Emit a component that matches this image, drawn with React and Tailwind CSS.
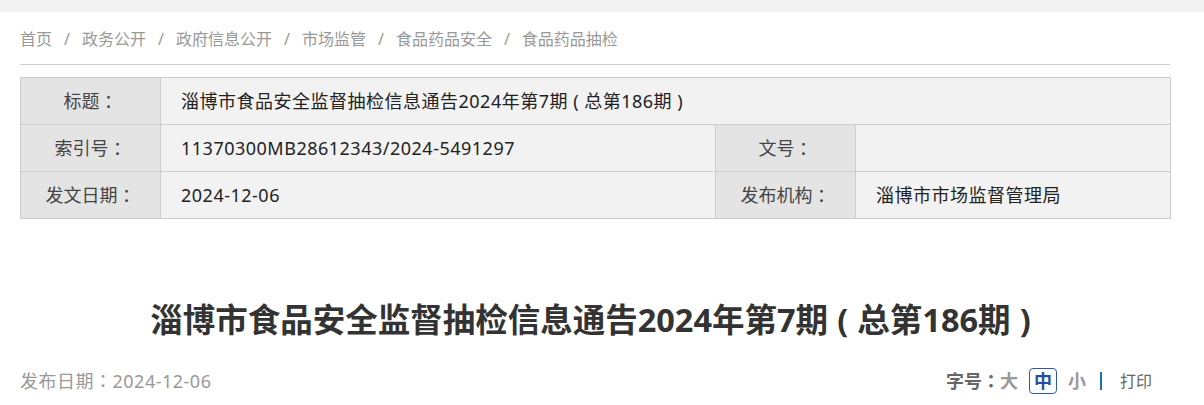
import React from 'react';

const crumbs = ['首页', '政务公开', '政府信息公开', '市场监管', '食品药品安全', '食品药品抽检'];

const font = { fontFamily: '"Noto Sans", "Noto Sans CJK SC", sans-serif' };

// centred full-width colon, as in the original page
function P({ children }) {
  return <span className="font-['Noto_Sans_CJK_TC',sans-serif]">{children}</span>;
}

// bracket centred in a full-width box
function B({ children }) {
  return <span className="inline-block w-[0.9em] text-center">{children}</span>;
}

function Label({ children, className = '' }) {
  return (
    <div className={`h-[47px] flex items-center justify-center bg-[#e4e4e4] border-r border-b border-[#cdcdcd] text-[18px] text-[#444] ${className}`}>
      {children}
    </div>
  );
}

function Value({ children, className = '' }) {
  return (
    <div className={`h-[47px] flex items-center pl-[20px] bg-[#f2f2f2] border-r border-b border-[#cdcdcd] text-[18px] tracking-[0.5px] text-[#222] ${className}`}>
      {children}
    </div>
  );
}

export default function App() {
  return (
    <div className="w-[1204px] h-[405px] bg-white overflow-hidden" style={font}>
      {/* top strip */}
      <div className="h-[12px] bg-[#f2f2f2]" />

      <div className="w-[1150px] ml-[20px]">
        {/* Breadcrumb */}
        <div className="pt-[15px] pb-[13px] border-b border-[#cccccc] flex items-center text-[16px] leading-[24px] text-[#999]">
          {crumbs.map((c, i) => (
            <React.Fragment key={c}>
              {i > 0 && <span className="px-[12px]">/</span>}
              <span>{c}</span>
            </React.Fragment>
          ))}
        </div>

        {/* Info table */}
        <div className="mt-[12px] grid grid-cols-[140px_555px_140px_315px] border-l border-t border-[#cdcdcd]">
          <Label>标题<P>：</P></Label>
          <Value className="col-span-3 tracking-[0.2px]">
            <span>淄博市食品安全监督抽检信息通告2024年第7期<B>(</B>总第186期<B>)</B></span>
          </Value>

          <Label>索引号<P>：</P></Label>
          <Value>11370300MB28612343/2024-5491297</Value>
          <Label>文号<P>：</P></Label>
          <Value />

          <Label>发文日期<P>：</P></Label>
          <Value>2024-12-06</Value>
          <Label>发布机构<P>：</P></Label>
          <Value>淄博市市场监督管理局</Value>
        </div>

        {/* Title */}
        <h1 className="mt-[79px] text-center text-[32.5px] leading-[44px] font-bold text-[#333]">
          淄博市食品安全监督抽检信息通告2024年第7期<B>(</B>总第186期<B>)</B>
        </h1>

        {/* Meta row */}
        <div className="mt-[24px] flex items-center justify-between h-[30px]">
          <div className="text-[18px] tracking-[0.5px] text-[#999]">发布日期<P>：</P>2024-12-06</div>
          <div className="flex items-center pr-[18px] text-[18px]">
            <span className="font-bold text-[#666]">字号<P>：</P></span>
            <span className="font-bold text-[#999]">大</span>
            <span className="ml-[11px] h-[26px] px-[4px] flex items-center border border-[#2d5aa0] rounded-[4px] font-bold text-[#1f4f9e]">中</span>
            <span className="ml-[11px] font-bold text-[#999]">小</span>
            <span className="ml-[14px] w-[2px] h-[18px] bg-[#1b74b0]" />
            <span className="ml-[18px] text-[16px] text-[#666]">打印</span>
          </div>
        </div>
      </div>
    </div>
  );
}
